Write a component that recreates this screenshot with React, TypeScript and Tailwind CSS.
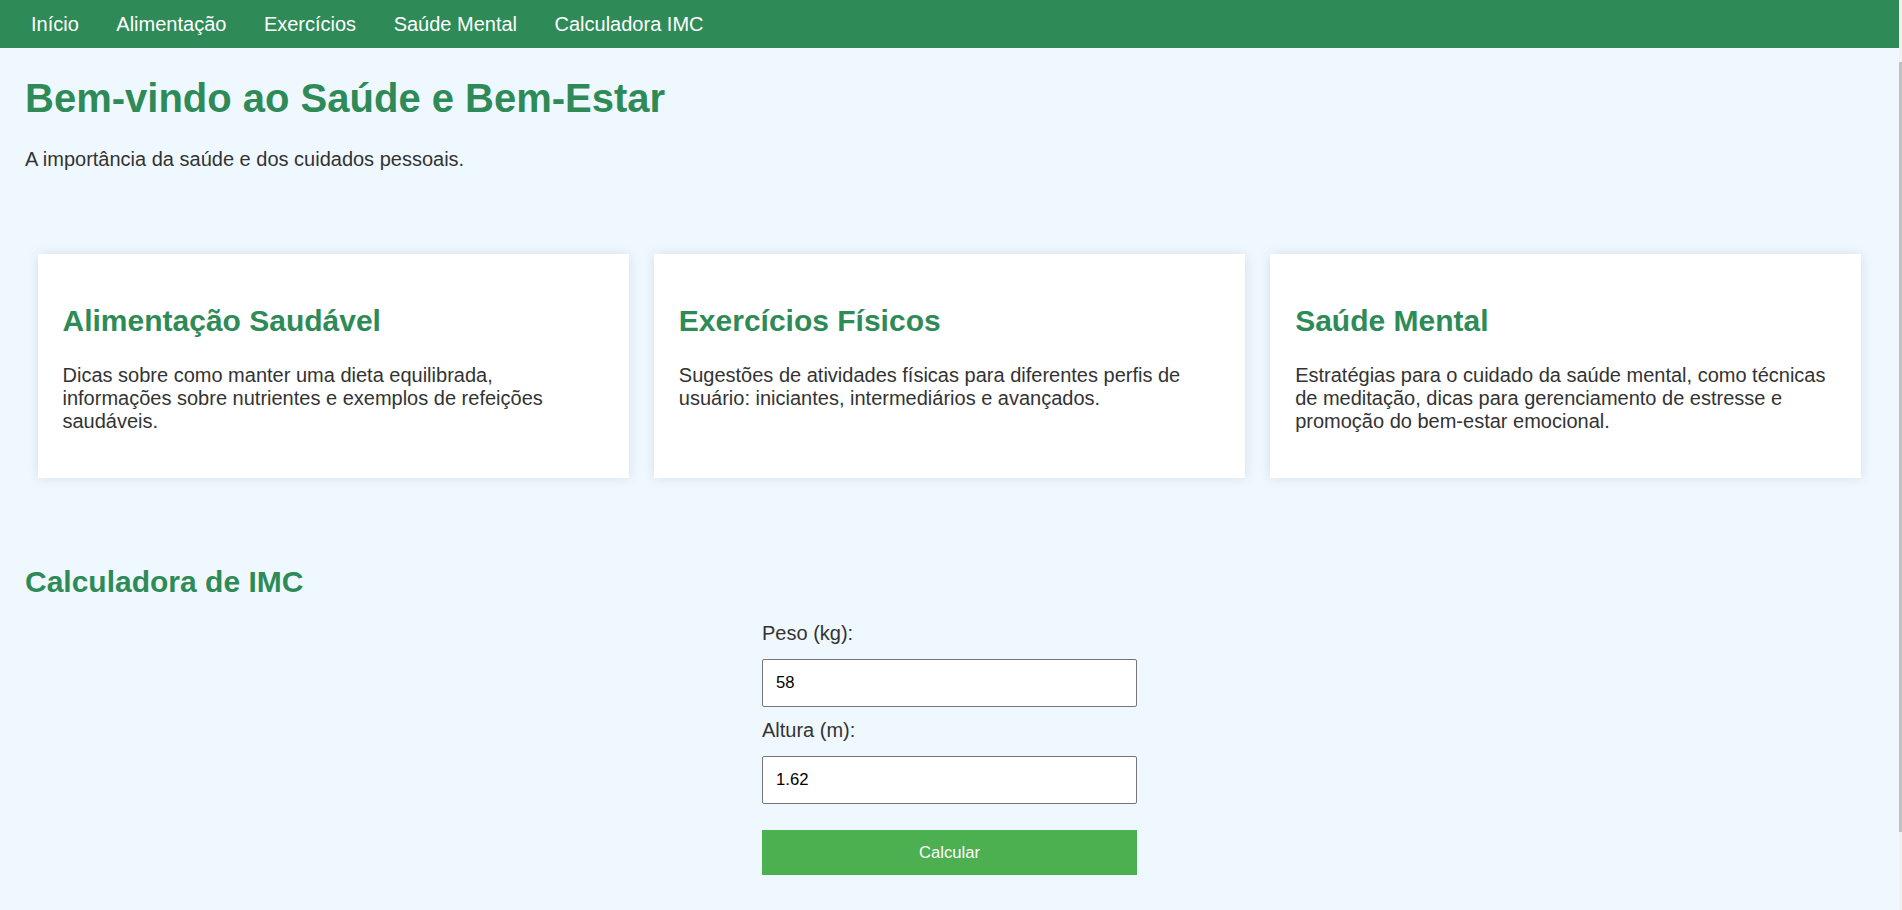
import { useState } from 'react';

const links = ['Início', 'Alimentação', 'Exercícios', 'Saúde Mental', 'Calculadora IMC'];

const cards = [
  {
    title: 'Alimentação Saudável',
    text: 'Dicas sobre como manter uma dieta equilibrada, informações sobre nutrientes e exemplos de refeições saudáveis.',
  },
  {
    title: 'Exercícios Físicos',
    text: 'Sugestões de atividades físicas para diferentes perfis de usuário: iniciantes, intermediários e avançados.',
  },
  {
    title: 'Saúde Mental',
    text: 'Estratégias para o cuidado da saúde mental, como técnicas de meditação, dicas para gerenciamento de estresse e promoção do bem-estar emocional.',
  },
];

export default function App() {
  const [peso, setPeso] = useState('58');
  const [altura, setAltura] = useState('1.62');

  return (
    <div className="flex min-h-screen h-[910px] overflow-hidden bg-[#f0f8ff] font-['Liberation_Sans',Arial,sans-serif] text-[#333]">
      <div className="flex-1 min-w-0">
        {/* Nav */}
        <nav className="h-[48px] bg-[#2e8b57] flex items-center pl-[31px] gap-[37.5px]">
          {links.map((l) => (
            <a key={l} href="#" className="text-white text-[20px] leading-[23px]">
              {l}
            </a>
          ))}
        </nav>

        {/* Header */}
        <header className="px-[25px]">
          <h1 className="mt-[27px] text-[40px] leading-[46px] font-bold text-[#2e8b57]">
            Bem-vindo ao Saúde e Bem-Estar
          </h1>
          <p className="mt-[27px] text-[20px] leading-[23px]">A importância da saúde e dos cuidados pessoais.</p>
        </header>

        {/* Cards */}
        <section className="mt-[83px] px-[25px] flex">
          {cards.map((c) => (
            <div
              key={c.title}
              className="flex-1 basis-0 mx-[12.5px] bg-white px-[25px] pt-[25px] pb-[45px] shadow-[0_0_12px_rgba(0,0,0,0.1)]"
            >
              <h2 className="mt-[25px] mb-[25px] text-[30px] leading-[34.5px] font-bold text-[#2e8b57]">{c.title}</h2>
              <p className="text-[20px] leading-[23px]">{c.text}</p>
            </div>
          ))}
        </section>

        {/* IMC */}
        <section className="px-[25px]">
          <h2 className="mt-[87px] text-[30px] leading-[34.5px] font-bold text-[#2e8b57]">Calculadora de IMC</h2>
          <form className="mx-auto mt-[23px] w-[375px] flex flex-col" onSubmit={(e) => e.preventDefault()}>
            <label className="text-[20px] leading-[23px] mb-[14px]">Peso (kg):</label>
            <input
              value={peso}
              onChange={(e) => setPeso(e.target.value)}
              className="h-[48px] mb-[12px] border border-[#767676] rounded-[2px] bg-white px-[13px] text-[16.67px] text-black outline-none"
            />
            <label className="text-[20px] leading-[23px] mb-[14px]">Altura (m):</label>
            <input
              value={altura}
              onChange={(e) => setAltura(e.target.value)}
              className="h-[48px] border border-[#767676] rounded-[2px] bg-white px-[13px] text-[16.67px] text-black outline-none"
            />
            <button type="submit" className="mt-[26px] h-[45px] bg-[#4caf50] text-white text-[16.67px]">
              Calcular
            </button>
          </form>
        </section>
      </div>

      {/* thin scrollbar */}
      <div className="w-[3px] shrink-0 bg-[#f1f1f1]">
        <div className="mt-[62px] h-[770px] bg-[#c1c1c1]" />
      </div>
    </div>
  );
}
